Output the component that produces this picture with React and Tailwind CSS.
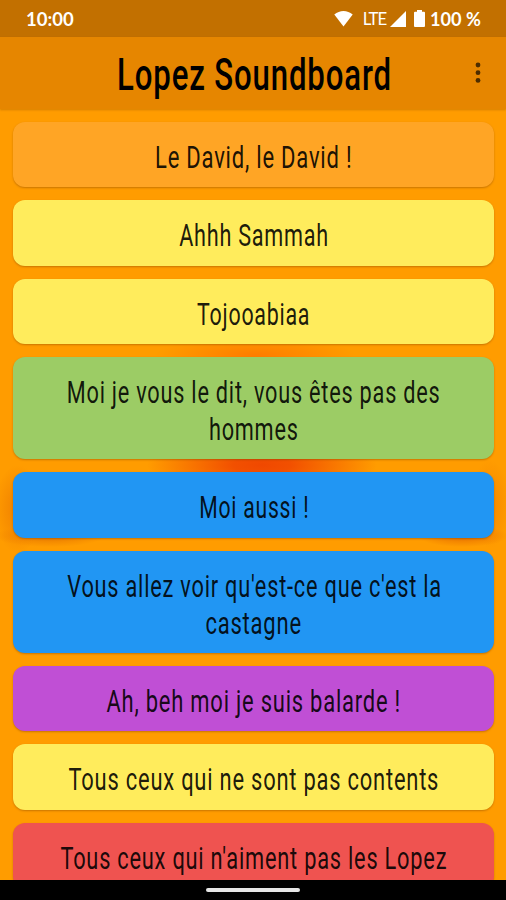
import React from "react";

const sounds = [
  { color: "bg-[#ffa525]", lines: [{ text: "Le David, le David !", fit: "scale-x-[0.71]" }] },
  { color: "bg-[#ffec5c]", lines: [{ text: "Ahhh Sammah", fit: "scale-x-[0.697]" }] },
  { color: "bg-[#ffec5c]", lines: [{ text: "Tojooabiaa", fit: "scale-x-[0.69]" }] },
  {
    color: "bg-[#9ccc65]",
    lines: [
      { text: "Moi je vous le dit, vous êtes pas des", fit: "scale-x-[0.70]" },
      { text: "hommes", fit: "scale-x-[0.70]" },
    ],
  },
  { color: "bg-[#2196f3]", lines: [{ text: "Moi aussi !", fit: "scale-x-[0.683]" }] },
  {
    color: "bg-[#2196f3]",
    lines: [
      { text: "Vous allez voir qu'est-ce que c'est la", fit: "scale-x-[0.702]" },
      { text: "castagne", fit: "scale-x-[0.71]" },
    ],
  },
  { color: "bg-[#c04fd5]", lines: [{ text: "Ah, beh moi je suis balarde !", fit: "scale-x-[0.708]" }] },
  { color: "bg-[#ffec5c]", lines: [{ text: "Tous ceux qui ne sont pas contents", fit: "scale-x-[0.707]" }] },
  { color: "bg-[#ef5350]", lines: [{ text: "Tous ceux qui n'aiment pas les Lopez", fit: "scale-x-[0.703]" }] },
];

function StatusBar() {
  return (
    <div className="flex h-[37px] shrink-0 items-center bg-[#c27000] pl-[26px] pr-[25px] font-['Lato',sans-serif] text-white">
      <span className="pt-px text-[18.5px] font-bold leading-none">10:00</span>
      <svg className="ml-auto" width="19" height="17" viewBox="0 0 20 17" fill="currentColor">
        <path d="M0.3 4.4C6 -0.7 14 -0.7 19.7 4.4L10 16.8Z" />
      </svg>
      <span className="ml-[10px] pt-px text-[16.8px] leading-none tracking-[-1.1px]">LTE</span>
      <svg className="ml-[4px]" width="16" height="16" viewBox="0 0 16 16" fill="currentColor">
        <path d="M16 0V16H0Z" />
      </svg>
      <svg className="ml-[8px]" width="11" height="17" viewBox="0 0 11 17" fill="currentColor">
        <path d="M3 0h5v1.7h2a1 1 0 0 1 1 1V16a1 1 0 0 1-1 1H1a1 1 0 0 1-1-1V2.7a1 1 0 0 1 1-1h2Z" />
      </svg>
      <span className="ml-[5px] pt-px text-[18.2px] font-bold leading-none">100 %</span>
    </div>
  );
}

function TitleBar() {
  return (
    <header className="relative z-10 flex h-[72px] shrink-0 items-center justify-center bg-[#e68600] shadow-[0_1px_2px_rgba(120,60,0,0.3)]">
      <h1 className="scale-x-[0.716] whitespace-nowrap pl-[3px] pt-[6px] font-['Roboto',sans-serif] text-[43.5px] font-medium leading-none tracking-[1.2px] text-black">
        Lopez Soundboard
      </h1>
      <button className="absolute right-[25px] top-[25px] text-[#4d2d00]" aria-label="Menu">
        <svg width="6" height="22" viewBox="0 0 6 22" fill="currentColor">
          <circle cx="3" cy="3" r="2.4" />
          <circle cx="3" cy="10.7" r="2.4" />
          <circle cx="3" cy="18.4" r="2.4" />
        </svg>
      </button>
    </header>
  );
}

function SoundButton({ sound }) {
  return (
    <button
      className={`flex w-full shrink-0 flex-col items-center rounded-[12px] pb-[11px] pt-[17px] shadow-[0_1px_2px_rgba(120,60,0,0.4)] ${sound.color}`}
    >
      {sound.lines.map((line) => (
        <span
          key={line.text}
          className={`block whitespace-nowrap pl-[2px] font-['Roboto',sans-serif] text-[31px] font-normal leading-[37.2px] tracking-[1.1px] text-black/90 ${line.fit}`}
        >
          {line.text}
        </span>
      ))}
    </button>
  );
}

export default function App() {
  return (
    <div className="flex h-[900px] w-[506px] flex-col overflow-hidden bg-[#ff9c00]">
      <StatusBar />
      <TitleBar />
      <main className="flex min-h-0 flex-1 flex-col gap-[13.1px] overflow-hidden bg-[radial-gradient(ellipse_115px_34px_at_262px_356px,#f04800_0%,#f25000_25%,transparent_100%),radial-gradient(ellipse_100px_18px_at_255px_246px,#ff7c00_0%,transparent_100%),radial-gradient(ellipse_24px_44px_at_18px_400px,#f08000_0%,transparent_100%),radial-gradient(ellipse_20px_44px_at_490px_395px,#f68800_0%,transparent_100%),radial-gradient(ellipse_55px_11px_at_50px_427px,#e87800_0%,transparent_100%),radial-gradient(ellipse_45px_11px_at_463px_427px,#e87000_0%,transparent_100%)] pl-[13.2px] pr-[12.4px] pt-[13px]">
        {sounds.map((sound) => (
          <SoundButton key={sound.lines[0].text} sound={sound} />
        ))}
      </main>
      <div className="flex h-5 shrink-0 items-center justify-center bg-black">
        <div className="h-1 w-[94px] rounded-full bg-[#e6e6e6]" />
      </div>
    </div>
  );
}
